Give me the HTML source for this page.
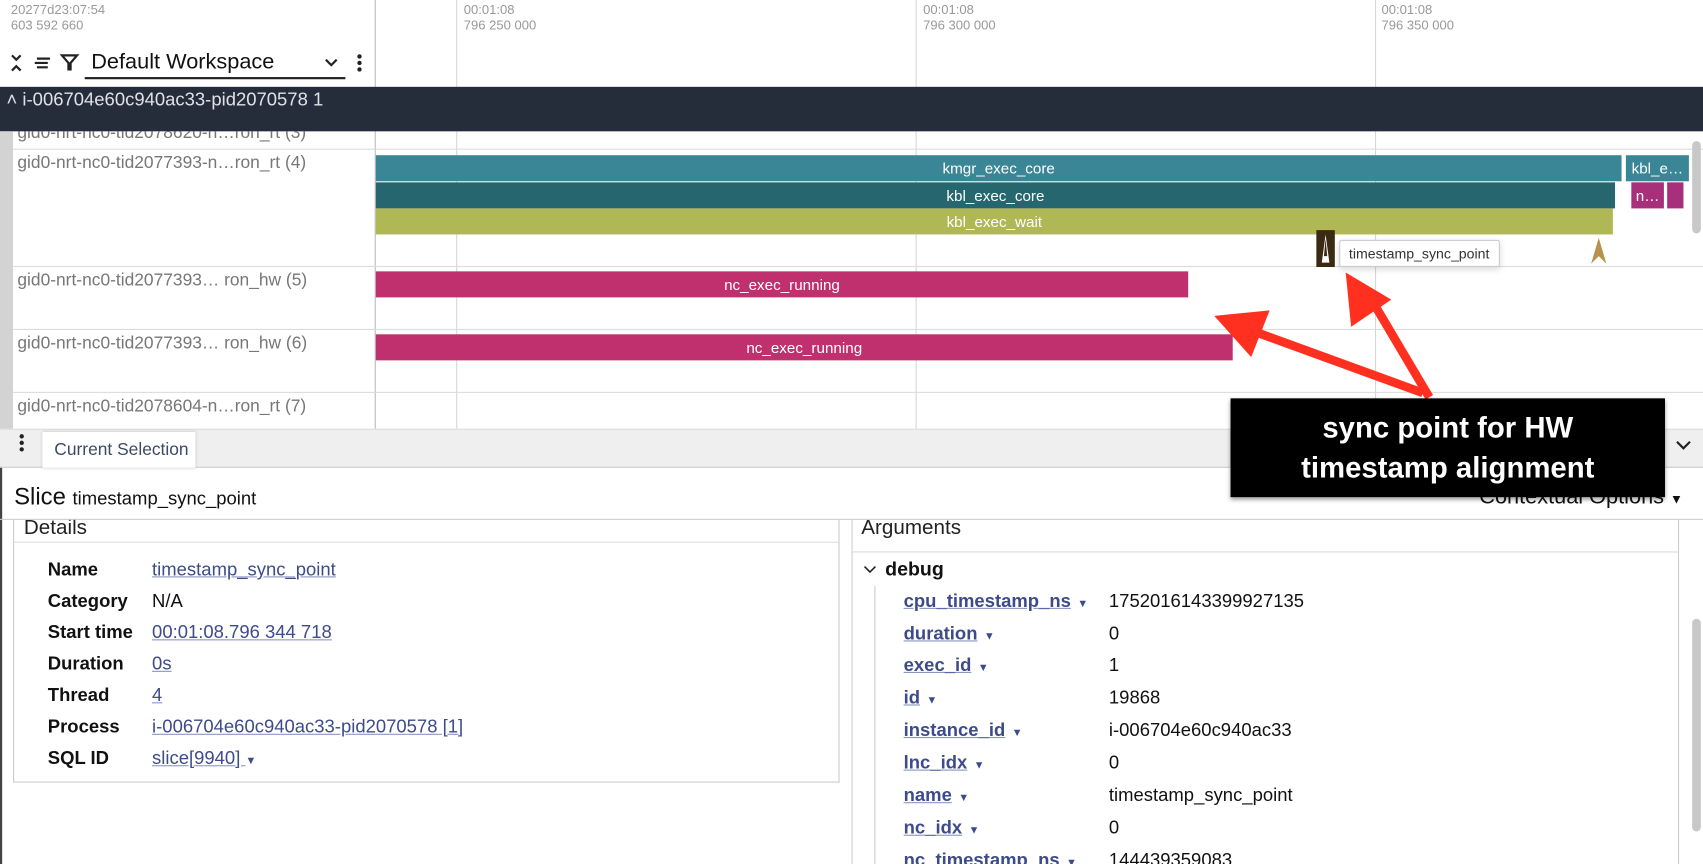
<!DOCTYPE html>
<html><head><meta charset="utf-8"><style>
*{box-sizing:border-box;margin:0;padding:0}
html,body{width:1703px;height:864px;overflow:hidden;background:#fff}
#w{position:absolute;left:0;top:0;width:1568px;height:796px;transform:scale(1.08610,1.08543);transform-origin:0 0;font-family:"Liberation Sans Narrow","Liberation Sans",sans-serif;overflow:hidden}
.a{position:absolute;white-space:nowrap}
.vl{position:absolute;width:1px;background:#d6d6d6}
.hl{position:absolute;height:1px;background:#dcdcdc}
.s{position:absolute;color:#fff;font-size:14px;text-align:center;line-height:24px;overflow:hidden}
.lab{position:absolute;left:44px;font-weight:bold;font-size:17px;color:#111}
.val{position:absolute;left:140px;font-size:17px;color:#3d4b8a;text-decoration:underline;text-decoration-color:#8a93c0}
.k{position:absolute;left:832px;font-size:17px;font-weight:bold;color:#3d4b8a;text-decoration:underline;text-decoration-color:#8a93c0}
.k i{font-style:normal;font-size:10px;margin-left:6px;text-decoration:none;display:inline-block}
.v{position:absolute;left:1021px;font-size:17px;color:#111}
.tl{font-size:12px;color:#999;line-height:14px}
.tr{position:absolute;left:16px;font-size:16px;color:#777}
</style></head><body><div id="w">
<div class="a tl" style="left:10px;top:2px">20277d23:07:54<br>603 592 660</div>
<div class="a tl" style="left:427px;top:2px">00:01:08<br>796 250 000</div>
<div class="a tl" style="left:850px;top:2px">00:01:08<br>796 300 000</div>
<div class="a tl" style="left:1272px;top:2px">00:01:08<br>796 350 000</div>
<div class="vl" style="left:345px;top:0;height:395px;background:#bbb"></div>
<div class="vl" style="left:420px;top:0;height:395px"></div>
<div class="vl" style="left:843px;top:0;height:395px"></div>
<div class="vl" style="left:1266px;top:0;height:395px"></div>
<svg class="a" style="left:8px;top:49px" width="14" height="18"><path d="M3 2l4 4 4-4M3 16l4-4 4 4" fill="none" stroke="#222" stroke-width="2"/></svg>
<svg class="a" style="left:30px;top:51px" width="18" height="14"><path d="M4 3h12M2 7h12M4 11h10" stroke="#222" stroke-width="2"/></svg>
<svg class="a" style="left:55px;top:49px" width="18" height="17"><path d="M2 2h14L10 9v6H8V9z" fill="none" stroke="#222" stroke-width="2"/></svg>
<div class="a" style="left:84px;top:46px;font-size:20px;color:#111">Default Workspace</div>
<div class="a" style="left:78px;top:71px;width:240px;height:2px;background:#222"></div>
<svg class="a" style="left:298px;top:53px" width="14" height="10"><path d="M2 2l5 5 5-5" fill="none" stroke="#222" stroke-width="2"/></svg>
<div class="a" style="left:329px;top:50px;width:4px;height:4px;border-radius:2px;background:#222;box-shadow:0 6px 0 #222,0 12px 0 #222"></div>
<div class="a" style="left:0;top:80px;width:1568px;height:41px;background:#262d3a"></div>
<div class="a" style="left:6px;top:82px;font-size:17px;color:#dfe2e8">˄ i-006704e60c940ac33-pid2070578 1</div>
<div class="a" style="left:0;top:121px;width:12px;height:274px;background:#d3d3d3"></div>
<div class="tr" style="top:114px;clip-path:inset(7px 0 0 0)">gid0-nrt-nc0-tid2078620-n…ron_rt (3)</div>
<div class="hl" style="left:12px;top:137px;width:1556px"></div>
<div class="tr" style="top:142px">gid0-nrt-nc0-tid2077393-n…ron_rt (4)</div>
<div class="hl" style="left:12px;top:245px;width:1556px"></div>
<div class="tr" style="top:250px">gid0-nrt-nc0-tid2077393… ron_hw (5)</div>
<div class="hl" style="left:12px;top:303px;width:1556px"></div>
<div class="tr" style="top:308px">gid0-nrt-nc0-tid2077393… ron_hw (6)</div>
<div class="hl" style="left:12px;top:361px;width:1556px"></div>
<div class="tr" style="top:366px">gid0-nrt-nc0-tid2078604-n…ron_rt (7)</div>
<div class="s" style="left:346px;top:143px;width:1147px;background:#3a8696">kmgr_exec_core</div>
<div class="s" style="left:1497px;top:143px;width:58px;background:#3a8696">kbl_e…</div>
<div class="s" style="left:346px;top:168px;width:1141px;background:#26666f">kbl_exec_core</div>
<div class="s" style="left:1502px;top:168px;width:30px;background:#a8307a">n…</div>
<div class="a" style="left:1535px;top:168px;width:15px;height:24px;background:#a8307a"></div>
<div class="s" style="left:346px;top:192px;width:1139px;background:#b0b855">kbl_exec_wait</div>
<div class="a" style="left:1212px;top:212px;width:17px;height:34px;background:#3b2a12"></div>
<svg class="a" style="left:1212px;top:212px" width="17" height="34"><path d="M8.5 4L5 30h7z" fill="#fff"/><path d="M8.5 8L7 24h3z" fill="#3b2a12"/></svg>
<div class="a" style="left:1233px;top:221px;width:148px;height:25px;border:1px solid #ccc;border-radius:2px;background:#fff;box-shadow:0 2px 6px rgba(0,0,0,.15);font-size:13px;color:#333;line-height:23px;padding-left:8px">timestamp_sync_point</div>
<svg class="a" style="left:1464px;top:219px" width="16" height="24"><path d="M8 0L1 24l7-7 7 7z" fill="#b8924a"/></svg>
<div class="s" style="left:346px;top:250px;width:748px;background:#c0306f">nc_exec_running</div>
<div class="s" style="left:346px;top:308px;width:789px;background:#c0306f">nc_exec_running</div>
<div class="a" style="left:1558px;top:130px;width:8px;height:85px;border-radius:4px;background:#c8c8c8"></div>
<div class="a" style="left:0;top:395px;width:1568px;height:36px;background:#efefef;border-top:1px solid #ddd;border-bottom:1px solid #ccc"></div>
<div class="a" style="left:18px;top:400px;width:4px;height:4px;border-radius:2px;background:#222;box-shadow:0 6px 0 #222,0 12px 0 #222"></div>
<div class="a" style="left:39px;top:398px;width:141px;height:33px;background:#fff;box-shadow:0 0 3px rgba(0,0,0,.2);font-size:16px;color:#3c4a66;line-height:33px;padding-left:11px">Current Selection</div>
<svg class="a" style="left:1542px;top:404px" width="16" height="12"><path d="M2 3l6 6 6-6" fill="none" stroke="#222" stroke-width="2"/></svg>
<div class="a" style="left:0;top:431px;width:2px;height:365px;background:#444"></div>
<div class="a" style="left:13px;top:445px;font-size:22px;color:#111">Slice <span style="font-size:17px">timestamp_sync_point</span></div>
<div class="a" style="left:1362px;top:447px;font-size:20px;color:#111">Contextual Options <span style="font-size:12px">▼</span></div>
<div class="hl" style="left:0;top:478px;width:1568px;background:#ccc"></div>
<div class="a" style="left:12px;top:478px;width:761px;height:243px;border:1px solid #ccc;border-top:none"></div>
<div class="a" style="left:22px;top:472px;font-size:19px;color:#222;height:26px;overflow:hidden;line-height:30px;clip-path:inset(7px 0 0 0)">Details</div>
<div class="hl" style="left:13px;top:499px;width:759px"></div>
<div class="lab" style="top:515px">Name</div><div class="val" style="top:515px">timestamp_sync_point</div>
<div class="lab" style="top:544px">Category</div><div class="val" style="top:544px;color:#111;text-decoration:none">N/A</div>
<div class="lab" style="top:573px">Start time</div><div class="val" style="top:573px">00:01:08.796 344 718</div>
<div class="lab" style="top:602px">Duration</div><div class="val" style="top:602px">0s</div>
<div class="lab" style="top:631px">Thread</div><div class="val" style="top:631px">4</div>
<div class="lab" style="top:660px">Process</div><div class="val" style="top:660px">i-006704e60c940ac33-pid2070578 [1]</div>
<div class="lab" style="top:689px">SQL ID</div><div class="val" style="top:689px">slice[9940] <span style="font-size:10px;text-decoration:none;display:inline-block">▼</span></div>
<div class="a" style="left:784px;top:478px;width:762px;height:318px;border-left:1px solid #ccc;border-right:1px solid #ccc"></div>
<div class="a" style="left:793px;top:472px;font-size:19px;color:#222;height:26px;line-height:30px;clip-path:inset(7px 0 0 0)">Arguments</div>
<div class="hl" style="left:785px;top:508px;width:760px"></div>
<svg class="a" style="left:795px;top:520px" width="12" height="10"><path d="M1 2l5 5 5-5" fill="none" stroke="#222" stroke-width="1.5"/></svg>
<div class="a" style="left:815px;top:514px;font-size:18px;font-weight:bold;color:#111">debug</div>
<div class="a" style="left:805px;top:540px;width:1px;height:256px;background:#ccc"></div>
<div class="k" style="top:544px">cpu_timestamp_ns<i>▼</i></div><div class="v" style="top:544px">1752016143399927135</div>
<div class="k" style="top:574px">duration<i>▼</i></div><div class="v" style="top:574px">0</div>
<div class="k" style="top:603px">exec_id<i>▼</i></div><div class="v" style="top:603px">1</div>
<div class="k" style="top:633px">id<i>▼</i></div><div class="v" style="top:633px">19868</div>
<div class="k" style="top:663px">instance_id<i>▼</i></div><div class="v" style="top:663px">i-006704e60c940ac33</div>
<div class="k" style="top:693px">lnc_idx<i>▼</i></div><div class="v" style="top:693px">0</div>
<div class="k" style="top:723px">name<i>▼</i></div><div class="v" style="top:723px">timestamp_sync_point</div>
<div class="k" style="top:753px">nc_idx<i>▼</i></div><div class="v" style="top:753px">0</div>
<div class="k" style="top:783px">nc_timestamp_ns<i>▼</i></div><div class="v" style="top:783px">144439359083</div>
<div class="a" style="left:1558px;top:570px;width:8px;height:196px;border-radius:4px;background:#c8c8c8"></div>
<svg class="a" style="left:0;top:0" width="1568" height="796">
<path d="M1316 366L1258 268M1310 362L1140 300" stroke="#ff3020" stroke-width="8" fill="none"/>
<path d="M1239 251L1244 301L1281 276z" fill="#ff3020"/>
<path d="M1118 291L1169 286L1152 329z" fill="#ff3020"/>
</svg>
<div class="a" style="left:1133px;top:367px;width:400px;height:91px;background:#000;box-shadow:0 2px 4px rgba(0,0,0,.4);color:#fff;font-family:'Liberation Sans',sans-serif;font-weight:bold;font-size:27px;text-align:center;line-height:37px;padding-top:9px">sync point for HW<br>timestamp alignment</div>
</div></body></html>
